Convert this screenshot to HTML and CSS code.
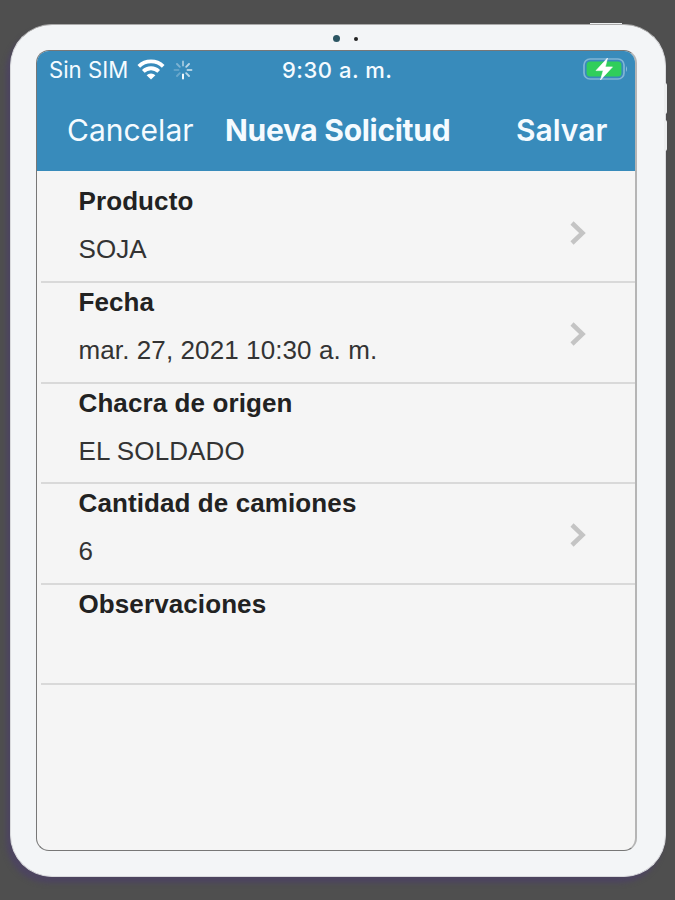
FILE: index.html
```html
<!DOCTYPE html>
<html lang="es">
<head>
<meta charset="utf-8">
<title>Nueva Solicitud</title>
<link rel="stylesheet" href="styles.css">
</head>
<body>
<div class="tablet">
  <i class="power"></i><i class="volume volume-up"></i><i class="volume volume-down"></i>
  <div class="camera"><i class="lens"></i><i class="sensor"></i></div>
  <main class="screen">
    <header class="top">
      <div class="status">
        <div class="carrier">
          <span class="sim">Sin SIM</span>
          <svg class="wifi" width="28" height="21" viewBox="0 0 28 21">
            <path d="M1.8 7.4a17.5 17.5 0 0 1 24.4 0M6.3 12.4a11 11 0 0 1 15.4 0" fill="none" stroke="#fff" stroke-width="3.8"/>
            <path d="M9.6 16.2a6.4 6.4 0 0 1 8.8 0L14 20.6z" fill="#fff"/>
          </svg>
          <svg class="spinner" width="20" height="20" viewBox="-10 -10 20 20" stroke="#fff" stroke-width="1.9" stroke-linecap="round">
            <path d="M0 4.5V8.5" />
            <path d="M3.2 3.2L6 6" opacity=".65"/>
            <path d="M4.5 0H8.5" opacity=".6"/>
            <path d="M3.2-3.2L6-6" opacity=".65"/>
            <path d="M0-4.5V-8.5" opacity=".5"/>
            <path d="M-3.2-3.2L-6-6" opacity=".35"/>
            <path d="M-4.5 0H-8.5" opacity=".2"/>
            <path d="M-3.2 3.2L-6 6" opacity=".25"/>
          </svg>
        </div>
        <span class="time">9:30 a. m.</span>
        <svg class="battery" width="46" height="24" viewBox="0 0 46 24">
          <rect x="1" y="2" width="40" height="20" rx="6" fill="none" stroke="#80b5d5" stroke-width="1.7"/>
          <rect x="3.6" y="4.6" width="34.8" height="14.8" rx="3.5" fill="#30ce5b"/>
          <path d="M43 9v6q2-3 0-6z" fill="#8fbedb"/>
          <path d="M24.5 1L13 13.6h7.2L17.5 23 29.5 9.9h-7.2z" fill="#fff" stroke="#fff" stroke-width=".6" stroke-linejoin="round"/>
        </svg>
      </div>
      <nav class="bar">
        <span class="cancel">Cancelar</span>
        <span class="title">Nueva Solicitud</span>
        <span class="save">Salvar</span>
      </nav>
    </header>
    <section class="form">
      <div class="row"><div class="field"><b>Producto</b><span>SOJA</span></div><svg class="chevron" width="18" height="26" viewBox="0 0 18 26"><path d="M3 3l10.5 10L3 23"/></svg></div>
      <div class="row"><div class="field"><b>Fecha</b><span>mar. 27, 2021 10:30 a. m.</span></div><svg class="chevron" width="18" height="26" viewBox="0 0 18 26"><path d="M3 3l10.5 10L3 23"/></svg></div>
      <div class="row"><div class="field"><b>Chacra de origen</b><span>EL SOLDADO</span></div></div>
      <div class="row"><div class="field"><b>Cantidad de camiones</b><span>6</span></div><svg class="chevron" width="18" height="26" viewBox="0 0 18 26"><path d="M3 3l10.5 10L3 23"/></svg></div>
      <div class="row"><div class="field"><b>Observaciones</b><span></span></div></div>
    </section>
  </main>
</div>
</body>
</html>
```

FILE: styles.css
```css
* { box-sizing: border-box; }
body {
  margin: 0;
  height: 900px;
  padding: 24px 9px 22px 10px;
  background: #4f4f4f;
  overflow: hidden;
  font-family: "Liberation Sans", Arial, sans-serif;
}
.tablet {
  position: relative;
  height: 853px;
  padding: 0 28px 26px 26px;
  border: 1px solid #d9dadd;
  border-top-color: #aaa;
  border-radius: 42px;
  background: #f3f5f7;
  box-shadow: -4px 6px 5px #4d4560;
}
.power, .volume { position: absolute; background: #eceeef; }
.power { top: -2px; right: 43px; width: 32px; height: 1px; }
.volume { right: -2px; width: 3px; height: 31px; border-radius: 0 2px 2px 0; }
.volume-up { top: 58px; }
.volume-down { top: 95px; }
.camera {
  display: flex;
  align-items: center;
  gap: 14px;
  height: 25px;
  padding: 2px 0 0 296px;
}
.lens { width: 7px; height: 7px; border-radius: 50%; background: #2b5563; }
.sensor { width: 4px; height: 4px; border-radius: 50%; background: #222; }
.screen {
  height: 801px;
  width: 601px;
  margin-left: -1px;
  border: 1px solid #777;
  border-right: 2px solid #b5b5b5;
  border-radius: 13px;
  background: #f5f5f5;
  overflow: hidden;
}
.top {
  height: 120px;
  margin-right: -1px;
  background: #388bbb;
  color: #f5fbff;
  font-family: Inter, sans-serif;
}
.status {
  display: grid;
  grid-template-columns: 244px 1fr 54px;
  align-items: center;
  height: 36px;
  padding-left: 12px;
  padding-top: 1px;
}
.carrier { display: flex; align-items: center; }
.sim { width: 79px; font-size: 22.2px; white-space: nowrap; }
.wifi { margin-left: 9px; }
.spinner { margin-left: 8px; }
.time { justify-self: start; font-size: 22px; font-weight: 550; letter-spacing: .5px; margin-left: -11px; white-space: nowrap; }
.battery { margin: -1px 0 0 1px; }
.bar {
  display: grid;
  grid-template-columns: 158px 291px 1fr;
  align-items: center;
  height: 84px;
  padding: 1px 0 0 30px;
  font-size: 30px;
  white-space: nowrap;
}
.title { font-weight: 700; letter-spacing: -.3px; }
.save { font-weight: 600; }
.row {
  display: flex;
  align-items: center;
  justify-content: space-between;
  height: 100.5px;
  margin-left: 4px;
  padding: 0 48px 0 37.5px;
  border-bottom: 2px solid #d9d9d9;
}
.row:first-child { height: 112px; padding-top: 11px; }
.field { display: flex; flex-direction: column; height: 100%; color: #333; font-size: 26px; }
.field b { height: 48px; line-height: 38px; color: #222; letter-spacing: .1px; }
.field span { line-height: 38px; letter-spacing: .1px; }
.chevron { margin-top: 3px; fill: none; stroke: #c4c4c4; stroke-width: 4.5; }
```
